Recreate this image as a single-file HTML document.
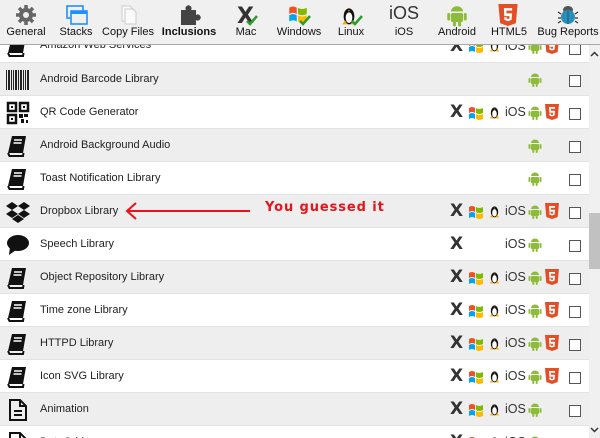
<!DOCTYPE html>
<html><head><meta charset="utf-8"><style>
*{margin:0;padding:0;box-sizing:border-box}
html,body{width:600px;height:438px;overflow:hidden}
body{background:#fff;font-family:"Liberation Sans","DejaVu Sans",sans-serif;position:relative}
#tb{position:absolute;left:0;top:0;width:600px;height:45px;background:#f0f0f0;border-bottom:1px solid #a8a8a8;z-index:5}
.t{position:absolute;top:0;width:70px;text-align:center;font-size:11px;color:#111}
.t svg{position:absolute;left:24px;top:4px}
.t span{position:absolute;left:0;right:0;top:26px}
.r{position:absolute;left:0;width:589px;height:33px;border-bottom:1px solid #e2e2e2;font-size:11px;color:#222}
.g{background:#efeeee}
.r .n{position:absolute;left:40px;top:10px}
.r .ic{position:absolute;left:5px;top:5px}
.p{position:absolute;top:9px}
.X{left:450px;top:6px;font-weight:bold;font-size:17px;color:#333;font-family:"DejaVu Sans",sans-serif}
.I{left:505px;top:9px;font-size:12.5px;color:#333}
.cb{position:absolute;left:569px;top:12px;width:12px;height:12px;border:1px solid #555;background:#fff}
#sb{position:absolute;left:589px;top:45px;width:11px;height:393px;background:#f0f0f0}
#th{position:absolute;left:589px;top:213px;width:11px;height:56px;background:#c1c1c1}
</style></head><body>
<svg width="0" height="0" style="position:absolute">
<defs>
<symbol id="and" viewBox="0 0 14 16"><path d="M3 5a4 3.5 0 0 1 8 0z" fill="#8dbb3b"/><rect x="3" y="6" width="8" height="6" rx="1" fill="#8dbb3b"/><rect x="0.5" y="6" width="2" height="5" rx="1" fill="#8dbb3b"/><rect x="11.5" y="6" width="2" height="5" rx="1" fill="#8dbb3b"/><rect x="4.3" y="11" width="2" height="4" rx="1" fill="#8dbb3b"/><rect x="7.7" y="11" width="2" height="4" rx="1" fill="#8dbb3b"/></symbol>
<symbol id="h5" viewBox="0 0 14 16"><path d="M0 0h14l-1.3 14L7 16l-5.7-2z" fill="#e44d26"/><path d="M4 3h6v1.8H5.8l.1 2H10l-.4 4.7L7 12.5l-2.6-1 -.1-2h1.6l.1 1 1 .4 1-.4.1-1.7H4.3z" fill="#fff"/></symbol>
<symbol id="win" viewBox="0 0 16 16"><path d="M1 3q3-2 6 0v5q-3-2-6 0z" fill="#f25022"/><path d="M8 3q3 2 7 0v5q-4 2-7 0z" fill="#7fba00"/><path d="M1 9q3-2 6 0v5q-3-2-6 0z" fill="#00a4ef"/><path d="M8 9q3 2 7 0v5q-4 2-7 0z" fill="#ffb900"/></symbol>
<symbol id="lin" viewBox="0 0 12 16"><ellipse cx="6" cy="9" rx="4" ry="6" fill="#111"/><ellipse cx="6" cy="10" rx="2.5" ry="4" fill="#fff"/><path d="M1 15l2-3 2 3zM7 15l2-3 2 3z" fill="#f2a900"/><path d="M5 4.5h2l-1 1z" fill="#f2a900"/></symbol>
<symbol id="book" viewBox="0 0 24 24"><path d="M7 2h14l-3 17H3z" fill="#111"/><path d="M3 19l1.5 3H18l.5-3" fill="none" stroke="#111" stroke-width="2"/><path d="M9 6h8M8.5 9h8" stroke="#fff" stroke-width="1.5"/></symbol>
</defs></svg>

<div id="tb">
<div class="t" style="left:-9px"><svg width="22" height="22" viewBox="0 0 22 22"><circle cx="11" cy="11" r="7" fill="#666"/><g stroke="#666" stroke-width="3.5"><path d="M11 1v20M1 11h20M4 4l14 14M18 4L4 18"/></g><circle cx="11" cy="11" r="3" fill="#f0f0f0"/></svg><span>General</span></div>
<div class="t" style="left:41px"><svg width="24" height="22" viewBox="0 0 24 22"><rect x="2" y="2" width="16" height="12" fill="none" stroke="#1e90ff" stroke-width="1.6"/><rect x="6" y="7" width="16" height="13" fill="#f0f0f0" stroke="#1e90ff" stroke-width="1.6"/><rect x="6" y="7" width="16" height="3" fill="#1e90ff"/></svg><span>Stacks</span></div>
<div class="t" style="left:93px"><svg width="22" height="22" viewBox="0 0 22 22"><path d="M5 2h8l3 3v12H5z" fill="#fafafa" stroke="#ccc"/><path d="M8 5h8l3 3v12H8z" fill="#fafafa" stroke="#ccc"/></svg><span>Copy Files</span></div>
<div class="t" style="left:154px"><svg width="24" height="22" viewBox="0 0 24 22"><path d="M3 6h5a3 3 0 1 1 5 0h5v5a3 3 0 1 1 0 5v5H3z" fill="#444"/></svg><span style="font-weight:bold">Inclusions</span></div>
<div class="t" style="left:211px"><svg width="24" height="24" viewBox="0 0 24 24"><text x="2" y="19" font-size="22" font-weight="bold" fill="#333" font-family="DejaVu Sans">X</text><path d="M12 17l3 3 7-8" fill="none" stroke="#2a9d2a" stroke-width="2.5"/></svg><span>Mac</span></div>
<div class="t" style="left:264px"><svg width="24" height="24" viewBox="0 0 24 24"><use href="#win" x="0" y="0" width="20" height="20"/><path d="M12 17l3 3 7-8" fill="none" stroke="#2a9d2a" stroke-width="2.5"/></svg><span>Windows</span></div>
<div class="t" style="left:316px"><svg width="24" height="24" viewBox="0 0 24 24"><use href="#lin" x="1" y="0" width="16" height="22"/><path d="M12 17l3 3 7-8" fill="none" stroke="#2a9d2a" stroke-width="2.5"/></svg><span>Linux</span></div>
<div class="t" style="left:369px"><span style="top:3px;font-size:18px;color:#333">iOS</span><span>iOS</span></div>
<div class="t" style="left:422px"><svg width="22" height="24" viewBox="0 0 14 16"><use href="#and"/></svg><span>Android</span></div>
<div class="t" style="left:474px"><svg width="20" height="22" viewBox="0 0 14 16"><use href="#h5"/></svg><span>HTML5</span></div>
<div class="t" style="left:533px"><svg width="22" height="22" viewBox="0 0 22 22"><ellipse cx="11" cy="6" rx="5" ry="4" fill="#555"/><ellipse cx="11" cy="13" rx="7" ry="7" fill="#2a8fb8"/><path d="M11 7v13" stroke="#185a75"/><g stroke="#333" stroke-width="1.3"><path d="M4 10l-3-2M4 14H1M4 17l-3 2M18 10l3-2M18 14h3M18 17l3 2"/></g></svg><span>Bug Reports</span></div>
</div>

<div class="r" style="top:30px"><svg class="ic" style="top:4px" width="26" height="24"><use href="#book" width="24" height="24"/></svg><span class="n" style="top:9px">Amazon Web Services</span><span class="p X" style="top:6px">X</span><svg class="p" style="left:468px;top:8px" width="16" height="16"><use href="#win" width="16" height="16"/></svg><svg class="p" style="left:489px;top:7px" width="11" height="16"><use href="#lin" width="11" height="16"/></svg><span class="p I" style="top:9px">iOS</span><svg class="p" style="left:528px;top:9px" width="14" height="16"><use href="#and" width="14" height="16"/></svg><svg class="p" style="left:545px;top:8px" width="14" height="16"><use href="#h5" width="14" height="16"/></svg><div class="cb" style="top:13px"></div></div>

<div class="r g" style="top:63px"><svg class="ic" width="26" height="24" viewBox="0 0 26 24"><g fill="#222"><rect x="1" y="2" width="1" height="20"/><rect x="3" y="2" width="2" height="20"/><rect x="6" y="2" width="1" height="20"/><rect x="8" y="2" width="1" height="20"/><rect x="10" y="2" width="2" height="20"/><rect x="13" y="2" width="1" height="20"/><rect x="15" y="2" width="2" height="20"/><rect x="18" y="2" width="1" height="20"/><rect x="20" y="2" width="1" height="20"/><rect x="22" y="2" width="2" height="20"/></g></svg><span class="n">Android Barcode Library</span><svg class="p" style="left:528px" width="14" height="16"><use href="#and" width="14" height="16"/></svg><div class="cb"></div></div>

<div class="r" style="top:96px"><svg class="ic" width="26" height="24" viewBox="0 0 24 24"><g fill="none" stroke="#111" stroke-width="2.5"><rect x="2" y="2" width="8" height="8"/><rect x="14" y="2" width="8" height="8"/><rect x="2" y="14" width="8" height="8"/></g><g fill="#111"><rect x="5" y="5" width="2" height="2"/><rect x="17" y="5" width="2" height="2"/><rect x="5" y="17" width="2" height="2"/><rect x="13" y="13" width="4" height="4"/><rect x="18" y="13" width="4" height="3"/><rect x="15" y="18" width="3" height="4"/><rect x="20" y="19" width="2" height="3"/></g></svg><span class="n">QR Code Generator</span><span class="p X">X</span><svg class="p" style="left:468px" width="16" height="16"><use href="#win" width="16" height="16"/></svg><svg class="p" style="left:489px;top:8px" width="11" height="16"><use href="#lin" width="11" height="16"/></svg><span class="p I">iOS</span><svg class="p" style="left:528px" width="14" height="16"><use href="#and" width="14" height="16"/></svg><svg class="p" style="left:545px;top:8px" width="14" height="16"><use href="#h5" width="14" height="16"/></svg><div class="cb"></div></div>

<div class="r g" style="top:129px"><svg class="ic" width="26" height="24"><use href="#book" width="24" height="24"/></svg><span class="n">Android Background Audio</span><svg class="p" style="left:528px" width="14" height="16"><use href="#and" width="14" height="16"/></svg><div class="cb"></div></div>

<div class="r" style="top:162px"><svg class="ic" width="26" height="24"><use href="#book" width="24" height="24"/></svg><span class="n">Toast Notification Library</span><svg class="p" style="left:528px" width="14" height="16"><use href="#and" width="14" height="16"/></svg><div class="cb"></div></div>

<div class="r g" style="top:195px"><svg class="ic" width="26" height="24" viewBox="0 0 24 24"><g fill="#111"><path d="M6 2l6 4-6 4-6-4z"/><path d="M18 2l6 4-6 4-6-4z"/><path d="M6 10l6 4-6 4-6-4z"/><path d="M18 10l6 4-6 4-6-4z"/><path d="M6 19l6-4 6 4-6 4z"/></g></svg><span class="n">Dropbox Library</span>
<svg style="position:absolute;left:124px;top:7px" width="130" height="18"><path d="M4 9h122" stroke="#e8141b" stroke-width="2"/><path d="M12 1L3 9l9 8" fill="none" stroke="#e8141b" stroke-width="2"/></svg>
<span style="position:absolute;left:265px;top:5px;color:#e8141b;font-weight:bold;font-size:13px;font-family:'DejaVu Sans',sans-serif;letter-spacing:0.9px">You guessed it</span>
<span class="p X">X</span><svg class="p" style="left:468px" width="16" height="16"><use href="#win" width="16" height="16"/></svg><svg class="p" style="left:489px;top:8px" width="11" height="16"><use href="#lin" width="11" height="16"/></svg><span class="p I">iOS</span><svg class="p" style="left:528px" width="14" height="16"><use href="#and" width="14" height="16"/></svg><svg class="p" style="left:545px;top:8px" width="14" height="16"><use href="#h5" width="14" height="16"/></svg><div class="cb"></div></div>

<div class="r" style="top:228px"><svg class="ic" width="26" height="24" viewBox="0 0 24 24"><ellipse cx="12" cy="10" rx="11" ry="8" fill="#111"/><path d="M4 14l-1 8 7-5z" fill="#111"/></svg><span class="n">Speech Library</span><span class="p X">X</span><span class="p I">iOS</span><svg class="p" style="left:528px" width="14" height="16"><use href="#and" width="14" height="16"/></svg><div class="cb"></div></div>

<div class="r g" style="top:261px"><svg class="ic" width="26" height="24"><use href="#book" width="24" height="24"/></svg><span class="n">Object Repository Library</span><span class="p X">X</span><svg class="p" style="left:468px" width="16" height="16"><use href="#win" width="16" height="16"/></svg><svg class="p" style="left:489px;top:8px" width="11" height="16"><use href="#lin" width="11" height="16"/></svg><span class="p I">iOS</span><svg class="p" style="left:528px" width="14" height="16"><use href="#and" width="14" height="16"/></svg><svg class="p" style="left:545px;top:8px" width="14" height="16"><use href="#h5" width="14" height="16"/></svg><div class="cb"></div></div>

<div class="r" style="top:294px"><svg class="ic" width="26" height="24"><use href="#book" width="24" height="24"/></svg><span class="n">Time zone Library</span><span class="p X">X</span><svg class="p" style="left:468px" width="16" height="16"><use href="#win" width="16" height="16"/></svg><svg class="p" style="left:489px;top:8px" width="11" height="16"><use href="#lin" width="11" height="16"/></svg><span class="p I">iOS</span><svg class="p" style="left:528px" width="14" height="16"><use href="#and" width="14" height="16"/></svg><svg class="p" style="left:545px;top:8px" width="14" height="16"><use href="#h5" width="14" height="16"/></svg><div class="cb"></div></div>

<div class="r g" style="top:327px"><svg class="ic" width="26" height="24"><use href="#book" width="24" height="24"/></svg><span class="n">HTTPD Library</span><span class="p X">X</span><svg class="p" style="left:468px" width="16" height="16"><use href="#win" width="16" height="16"/></svg><svg class="p" style="left:489px;top:8px" width="11" height="16"><use href="#lin" width="11" height="16"/></svg><span class="p I">iOS</span><svg class="p" style="left:528px" width="14" height="16"><use href="#and" width="14" height="16"/></svg><svg class="p" style="left:545px;top:8px" width="14" height="16"><use href="#h5" width="14" height="16"/></svg><div class="cb"></div></div>

<div class="r" style="top:360px"><svg class="ic" width="26" height="24"><use href="#book" width="24" height="24"/></svg><span class="n">Icon SVG Library</span><span class="p X">X</span><svg class="p" style="left:468px" width="16" height="16"><use href="#win" width="16" height="16"/></svg><svg class="p" style="left:489px;top:8px" width="11" height="16"><use href="#lin" width="11" height="16"/></svg><span class="p I">iOS</span><svg class="p" style="left:528px" width="14" height="16"><use href="#and" width="14" height="16"/></svg><svg class="p" style="left:545px;top:8px" width="14" height="16"><use href="#h5" width="14" height="16"/></svg><div class="cb"></div></div>

<div class="r g" style="top:393px"><svg class="ic" width="26" height="24" viewBox="0 0 24 24"><path d="M4 2h10l6 6v14H4z" fill="none" stroke="#111" stroke-width="2"/><path d="M14 2v6h6" fill="none" stroke="#111" stroke-width="2"/><path d="M8 13h8M8 17h8" stroke="#111" stroke-width="2"/></svg><span class="n">Animation</span><span class="p X">X</span><svg class="p" style="left:468px" width="16" height="16"><use href="#win" width="16" height="16"/></svg><svg class="p" style="left:489px;top:8px" width="11" height="16"><use href="#lin" width="11" height="16"/></svg><span class="p I">iOS</span><svg class="p" style="left:528px" width="14" height="16"><use href="#and" width="14" height="16"/></svg><div class="cb"></div></div>

<div class="r" style="top:426px"><svg class="ic" width="26" height="24" viewBox="0 0 24 24"><path d="M4 2h10l6 6v14H4z" fill="none" stroke="#111" stroke-width="2"/><path d="M14 2v6h6" fill="none" stroke="#111" stroke-width="2"/></svg><span class="n">DataGrid</span><span class="p X">X</span><svg class="p" style="left:468px" width="16" height="16"><use href="#win" width="16" height="16"/></svg><svg class="p" style="left:489px;top:8px" width="11" height="16"><use href="#lin" width="11" height="16"/></svg><span class="p I">iOS</span><svg class="p" style="left:528px" width="14" height="16"><use href="#and" width="14" height="16"/></svg><div class="cb"></div></div>

<div id="sb"></div><div id="th"></div>
<svg style="position:absolute;left:590px;top:51px" width="9" height="6"><path d="M1 5l3.5-3.5L8 5" fill="none" stroke="#333" stroke-width="1.5"/></svg>
<svg style="position:absolute;left:590px;top:427px" width="9" height="6"><path d="M1 1l3.5 3.5L8 1" fill="none" stroke="#333" stroke-width="1.5"/></svg>
</body></html>
